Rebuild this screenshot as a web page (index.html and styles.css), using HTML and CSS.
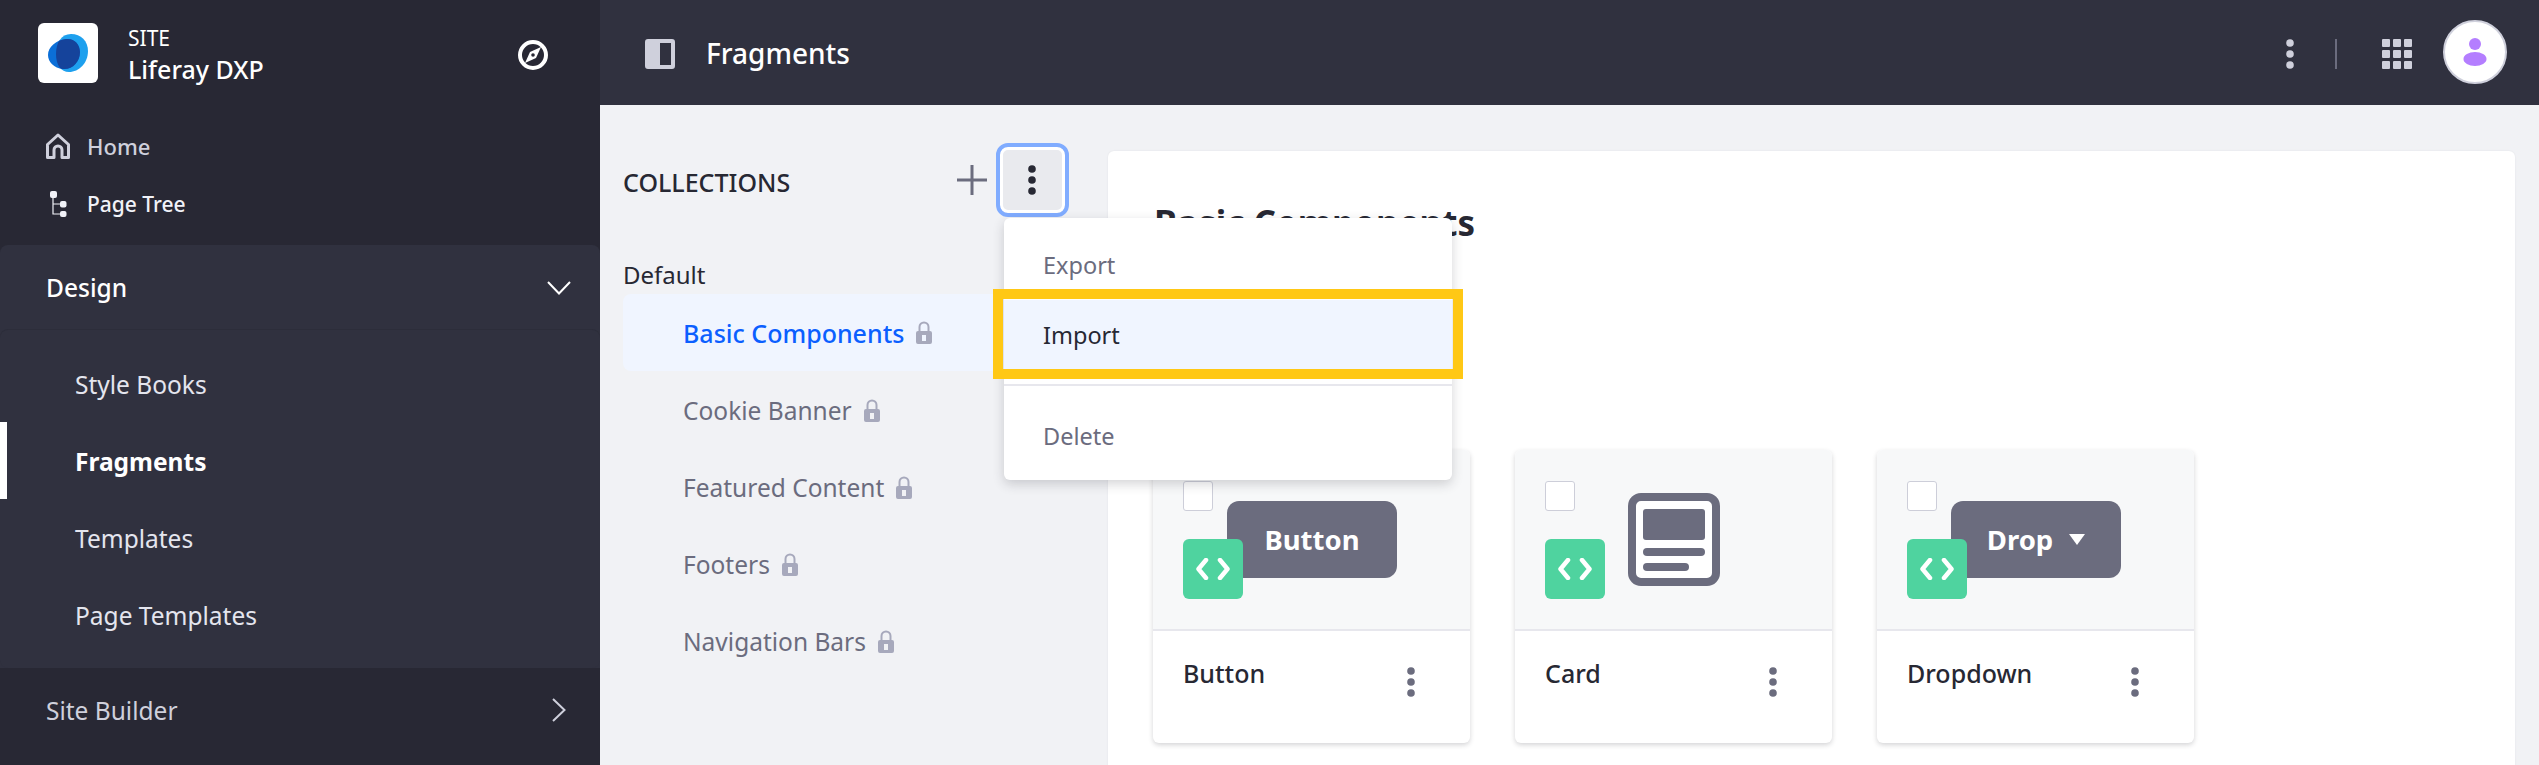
FILE: index.html
```html
<!DOCTYPE html>
<html lang="en">
<head>
  <meta charset="UTF-8" />
  <title>Fragments</title>
  <link rel="stylesheet" href="styles.css">
</head>
<body>
  <div class="app">
    <!-- Sidebar -->
    <aside class="sidebar">
      <div class="site">
        <div class="site-logo">
          <svg width="40" height="38" viewBox="0 0 40 38">
            <defs>
              <clipPath id="logoClip"><path d="M23 0C33 0 40 7 40 17C40 29 31 38 21 38C13 38 8 31 8 20C8 9 13 0 23 0Z"/></clipPath>
            </defs>
            <path d="M23 0C33 0 40 7 40 17C40 29 31 38 21 38C13 38 8 31 8 20C8 9 13 0 23 0Z" fill="#1ea0ee"/>
            <path d="M18 5C26 4 32 10 32 18C32 28 24 36 15 35C6 34 0 28 0 21C0 13 8 6 18 5Z" fill="#0b6fd8"/>
            <path clip-path="url(#logoClip)" d="M18 5C26 4 32 10 32 18C32 28 24 36 15 35C6 34 0 28 0 21C0 13 8 6 18 5Z" fill="#15439b"/>
          </svg>
        </div>
        <div class="site-text">
          <div class="site-label">SITE</div>
          <div class="site-name">Liferay DXP</div>
        </div>
        <svg class="compass" width="30" height="30" viewBox="0 0 30 30">
          <circle cx="15" cy="15" r="13" fill="none" stroke="#fff" stroke-width="4"/>
          <path d="M23 7L18 18L7 23L12 12Z" fill="#fff"/>
          <circle cx="15" cy="15" r="1.800" fill="#282834"/>
        </svg>
      </div>

      <div class="quick-link quick-home">
        <svg width="24" height="26" viewBox="0 0 24 26">
          <path d="M12 2L1.500 11.500V24.500H8V17A4 4 0 0 1 16 17V24.500H22.500V11.500Z" fill="none" stroke="#cfd0dc" stroke-width="3" stroke-linejoin="round"/>
        </svg>
        Home
      </div>
      <div class="quick-link quick-tree">
        <svg width="24" height="26" viewBox="0 0 24 26">
          <rect x="4" y="0" width="7" height="7" rx="2" fill="#f1f2f8"/>
          <rect x="14" y="10" width="6.500" height="6.500" rx="2" fill="#f1f2f8"/>
          <rect x="14" y="20" width="6.500" height="6" rx="2" fill="#f1f2f8"/>
          <path d="M7 7V23H14M7 13H14" fill="none" stroke="#f1f2f8" stroke-width="1.200"/>
        </svg>
        Page Tree
      </div>

      <div class="nav-panel">
        <div class="nav-head">
          <span>Design</span>
          <svg width="24" height="14" viewBox="0 0 24 14"><path d="M1 1L12 12.500L23 1" fill="none" stroke="#fff" stroke-width="2"/></svg>
        </div>
        <ul class="nav-list">
          <li>Style Books</li>
          <li class="active">Fragments</li>
          <li>Templates</li>
          <li>Page Templates</li>
        </ul>
      </div>

      <div class="nav-closed">
        <span>Site Builder</span>
        <svg width="14" height="24" viewBox="0 0 14 24"><path d="M1 1L12.500 12L1 23" fill="none" stroke="#cfd0dc" stroke-width="2"/></svg>
      </div>
    </aside>

    <div class="main">
      <!-- Header -->
      <header class="topbar">
        <svg class="panel-icon" width="30" height="30" viewBox="0 0 30 30">
          <path fill-rule="evenodd" d="M3 0H27A3 3 0 0 1 30 3V27A3 3 0 0 1 27 30H3A3 3 0 0 1 0 27V3A3 3 0 0 1 3 0ZM15 4V26H26V4Z" fill="#cfd0dc"/>
          <rect x="15" y="4" width="11" height="22" fill="#30313f"/>
        </svg>
        <h1>Fragments</h1>
        <div class="topbar-right">
          <svg width="8" height="30" viewBox="0 0 8 30">
            <circle cx="4" cy="4" r="3.800" fill="#cfd0dc"/><circle cx="4" cy="15" r="3.800" fill="#cfd0dc"/><circle cx="4" cy="26" r="3.800" fill="#cfd0dc"/>
          </svg>
          <div class="topbar-divider"></div>
          <svg class="apps" width="30" height="30" viewBox="0 0 30 30" fill="#cfd0dc">
            <rect width="8" height="8" rx="1"/><rect x="11" width="8" height="8" rx="1"/><rect x="22" width="8" height="8" rx="1"/>
            <rect y="11" width="8" height="8" rx="1"/><rect x="11" y="11" width="8" height="8" rx="1"/><rect x="22" y="11" width="8" height="8" rx="1"/>
            <rect y="22" width="8" height="8" rx="1"/><rect x="11" y="22" width="8" height="8" rx="1"/><rect x="22" y="22" width="8" height="8" rx="1"/>
          </svg>
          <div class="avatar">
            <svg width="24" height="28" viewBox="0 0 24 28" fill="#b47eff">
              <circle cx="12" cy="6" r="6"/><ellipse cx="12" cy="21" rx="11.500" ry="7"/>
            </svg>
          </div>
        </div>
      </header>

      <div class="content">
        <!-- Collections -->
        <section class="collections">
          <div class="coll-head">
            <span class="coll-title">COLLECTIONS</span>
            <svg class="plus" width="30" height="30" viewBox="0 0 30 30"><path d="M15 0V30M0 15H30" stroke="#6b6c7e" stroke-width="3"/></svg>
            <div class="kebab-btn">
              <svg width="8" height="30" viewBox="0 0 8 30" fill="#272833">
                <circle cx="4" cy="4" r="3.800"/><circle cx="4" cy="15" r="3.800"/><circle cx="4" cy="26" r="3.800"/>
              </svg>
            </div>
          </div>
          <div class="coll-group">Default</div>
          <ul class="coll-list">
            <li class="selected">Basic Components <svg class="lock" width="16" height="23" viewBox="0 0 16 23"><use href="#lock"/></svg></li>
            <li>Cookie Banner <svg class="lock" width="16" height="23" viewBox="0 0 16 23"><use href="#lock"/></svg></li>
            <li>Featured Content <svg class="lock" width="16" height="23" viewBox="0 0 16 23"><use href="#lock"/></svg></li>
            <li>Footers <svg class="lock" width="16" height="23" viewBox="0 0 16 23"><use href="#lock"/></svg></li>
            <li>Navigation Bars <svg class="lock" width="16" height="23" viewBox="0 0 16 23"><use href="#lock"/></svg></li>
          </ul>
        </section>

        <!-- Fragment cards -->
        <section class="board">
          <h2>Basic Components</h2>
          <div class="cards">
            <div class="card">
              <div class="card-img">
                <div class="check"></div>
                <div class="badge"><svg width="36" height="22" viewBox="0 0 36 22"><use href="#code"/></svg></div>
                <div class="thumb-btn">Button</div>
              </div>
              <div class="card-foot">
                <span>Button</span>
                <svg width="8" height="30" viewBox="0 0 8 30"><use href="#dots"/></svg>
              </div>
            </div>
            <div class="card">
              <div class="card-img">
                <div class="check"></div>
                <div class="badge"><svg width="36" height="22" viewBox="0 0 36 22"><use href="#code"/></svg></div>
                <svg class="thumb-card" width="92" height="93" viewBox="0 0 92 93">
                  <rect x="4" y="4" width="84" height="85" rx="9" fill="#fff" stroke="#6b6c7e" stroke-width="8"/>
                  <rect x="15" y="16" width="62" height="31" rx="3" fill="#6b6c7e"/>
                  <rect x="15" y="55" width="62" height="8" rx="4" fill="#6b6c7e"/>
                  <rect x="15" y="70" width="46" height="8" rx="4" fill="#6b6c7e"/>
                </svg>
              </div>
              <div class="card-foot">
                <span>Card</span>
                <svg width="8" height="30" viewBox="0 0 8 30"><use href="#dots"/></svg>
              </div>
            </div>
            <div class="card">
              <div class="card-img">
                <div class="check"></div>
                <div class="badge"><svg width="36" height="22" viewBox="0 0 36 22"><use href="#code"/></svg></div>
                <div class="thumb-btn thumb-drop">Drop <i class="caret"></i></div>
              </div>
              <div class="card-foot">
                <span>Dropdown</span>
                <svg width="8" height="30" viewBox="0 0 8 30"><use href="#dots"/></svg>
              </div>
            </div>
          </div>
        </section>

        <!-- Open menu and callout -->
        <div class="menu">
          <div class="menu-item menu-export">Export</div>
          <div class="menu-item menu-import">Import</div>
          <div class="menu-sep"></div>
          <div class="menu-item menu-delete">Delete</div>
        </div>
        <div class="callout"></div>
      </div>
    </div>
  </div>

  <svg class="defs" width="0" height="0">
    <defs>
      <g id="lock">
        <path d="M3.500 11V6A4.500 4.500 0 0 1 12.500 6V11" fill="none" stroke="currentColor" stroke-width="2"/>
        <path fill-rule="evenodd" d="M2 10H14A2 2 0 0 1 16 12V21A2 2 0 0 1 14 23H2A2 2 0 0 1 0 21V12A2 2 0 0 1 2 10ZM6 14V20H10V14Z" fill="currentColor"/>
      </g>
      <g id="code">
        <path d="M11 2L3.500 11L11 20M25 2L32.500 11L25 20" fill="none" stroke="#fff" stroke-width="4.500" stroke-linecap="round" stroke-linejoin="round"/>
      </g>
      <g id="dots" fill="#6b6c7e">
        <circle cx="4" cy="4" r="3.800"/><circle cx="4" cy="15" r="3.800"/><circle cx="4" cy="26" r="3.800"/>
      </g>
    </defs>
  </svg>
</body>
</html>
```

FILE: styles.css
```css
* { box-sizing: border-box; }
html, body { margin: 0; height: 100%; }
body { font-family: "Noto Sans", "Open Sans", sans-serif; overflow: hidden; background: #f1f2f5; }
ul { list-style: none; margin: 0; padding: 0; }
.defs { position: absolute; }

.app { display: flex; width: 2539px; height: 765px; overflow: hidden; }

/* sidebar */
.sidebar { width: 600px; flex: none; background: #282834; color: #fff; }
.site { height: 117px; display: flex; align-items: flex-start; padding: 23px 52px 0 38px; }
.site-logo { width: 60px; height: 60px; background: #fff; border-radius: 6px; display: flex; align-items: center; justify-content: center; }
.site-text { margin-left: 30px; flex: 1; }
.site-label { font-size: 21px; line-height: 26px; margin-top: 2px; }
.site-name { font-size: 25px; line-height: 32px; font-weight: 500; margin-top: 2px; }
.compass { margin-top: 17px; }
.quick-link { display: flex; align-items: center; gap: 17px; height: 57px; padding-left: 46px; font-size: 22px; font-weight: 500; }
.quick-link svg { flex: none; }
.quick-home { color: #cfd0dc; }
.quick-tree { color: #f1f2f8; height: 71px; padding-bottom: 12px; font-size: 21px; }
.nav-panel { background: #30313f; border-radius: 8px 8px 0 0; }
.nav-head { height: 85px; display: flex; align-items: center; justify-content: space-between; padding: 0 29px 0 46px; font-size: 24.500px; font-weight: 500; }
.nav-list { height: 338px; padding-top: 15px; border-radius: 8px; background: #30313f; box-shadow: 0 -1px 0 #2c2d3a; }
.nav-list li { height: 77px; display: flex; align-items: center; padding: 2px 0 0 75px; font-size: 24.500px; color: #e4e5ee; }
.nav-list li.active { font-weight: 700; color: #fff; border-left: 7px solid #fff; padding-left: 68px; }
.nav-closed { height: 86px; display: flex; align-items: center; justify-content: space-between; padding: 0 34px 2px 46px; font-size: 24.500px; color: #cfd0dc; }

/* header */
.main { flex: 1; display: flex; flex-direction: column; }
.topbar { height: 105px; flex: none; background: #30313f; display: flex; align-items: center; padding-left: 45px; }
.panel-icon { flex: none; margin-top: 2px; }
.topbar h1 { margin: 0 0 0 31px; font-size: 28px; font-weight: 500; color: #fff; }
.topbar-right { margin-left: auto; display: flex; align-items: center; padding: 0 32px 0 0; margin-top: 2px; }
.topbar-divider { width: 2px; height: 30px; background: #6b6c7e; margin: 0 45px 0 41px; }
.apps { margin-right: 31px; }
.avatar { width: 64px; height: 64px; margin-top: -4px; border-radius: 50%; background: #fff; border: 2px solid #cfd0dc; display: flex; align-items: center; justify-content: center; }

/* collections */
.content { position: relative; flex: 1; display: flex; min-height: 0; }
.collections { width: 508px; flex: none; padding: 38px 0 0 23px; }
.coll-head { display: flex; align-items: center; height: 74px; }
.coll-title { font-size: 25px; font-weight: 500; color: #272833; margin-right: auto; margin-top: 4px; }
.plus { margin-right: 9px; }
.kebab-btn { width: 73px; height: 74px; margin-right: 39px; padding-right: 2px; border: 4px solid #80acff; border-radius: 12px; background: #e9eaee; box-shadow: inset 0 0 0 3px #fff; display: flex; align-items: center; justify-content: center; }
.coll-group { font-size: 24px; line-height: 30px; color: #272833; margin-top: 43px; }
.coll-list { margin-top: 4px; }
.coll-list li { height: 77px; display: flex; align-items: center; gap: 12px; padding: 2px 0 0 60px; font-size: 24.500px; color: #6b6c7e; border-radius: 8px; }
.coll-list li.selected { color: #0b5fff; font-size: 25px; font-weight: 500; background: #f0f5ff; padding-top: 0; }
.lock { color: #a7a9bc; flex: none; }

/* board */
.board { width: 1407px; flex: none; height: 100%; margin-top: 46px; padding: 50px 0 0 45px; background: #fff; border-radius: 6px 6px 0 0; box-shadow: 0 0 2px rgba(39, 40, 51, 0.08); }
.board h2 { margin: 0 0 0 1px; font-size: 35px; line-height: 44px; font-weight: 700; color: #272833; }
.cards { display: flex; gap: 45px; margin-top: 205px; }
.card { width: 317px; height: 293px; border-radius: 6px; background: #fff; box-shadow: 0 2px 5px rgba(39, 40, 51, 0.2); overflow: hidden; }
.card-img { position: relative; height: 181px; background: #f7f8f9; border-bottom: 2px solid #e7e7ed; }
.check { position: absolute; left: 30px; top: 31px; width: 30px; height: 30px; background: #fff; border: 1px solid #cdced9; border-radius: 3px; }
.badge { position: absolute; z-index: 1; left: 30px; top: 89px; width: 60px; height: 60px; background: #4fd39f; border-radius: 6px; display: flex; align-items: center; justify-content: center; }
.thumb-btn { position: absolute; left: 74px; top: 51px; width: 170px; height: 77px; background: #6b6c7e; border-radius: 12px; color: #fff; font-size: 27.500px; font-weight: 700; display: flex; align-items: center; justify-content: center; }
.thumb-drop { gap: 16px; }
.caret { width: 0; height: 0; border: 8px solid transparent; border-top: 11px solid #fff; border-bottom: 0; }
.thumb-card { position: absolute; left: 113px; top: 43px; }
.card-foot { display: flex; justify-content: space-between; align-items: flex-start; padding: 25px 55px 0 30px; font-size: 25px; font-weight: 500; color: #272833; }
.card-foot svg { margin-top: 11px; }

/* dropdown menu */
.menu { position: absolute; left: 404px; top: 113px; width: 448px; height: 262px; background: #fff; border-radius: 6px; box-shadow: 0 4px 12px rgba(39, 40, 51, 0.2); padding-top: 12px; }
.menu-item { height: 70px; display: flex; align-items: center; padding-left: 39px; font-size: 23.500px; color: #6b6c7e; }
.menu-import { height: 69px; color: #272833; background: #f0f5ff; }
.menu-sep { height: 2px; margin-top: 15px; background: #e7e7ed; }
.menu-delete { margin-top: 15px; }
.callout { position: absolute; left: 393px; top: 184px; width: 470px; height: 90px; border: 10px solid #ffc815; }
```
